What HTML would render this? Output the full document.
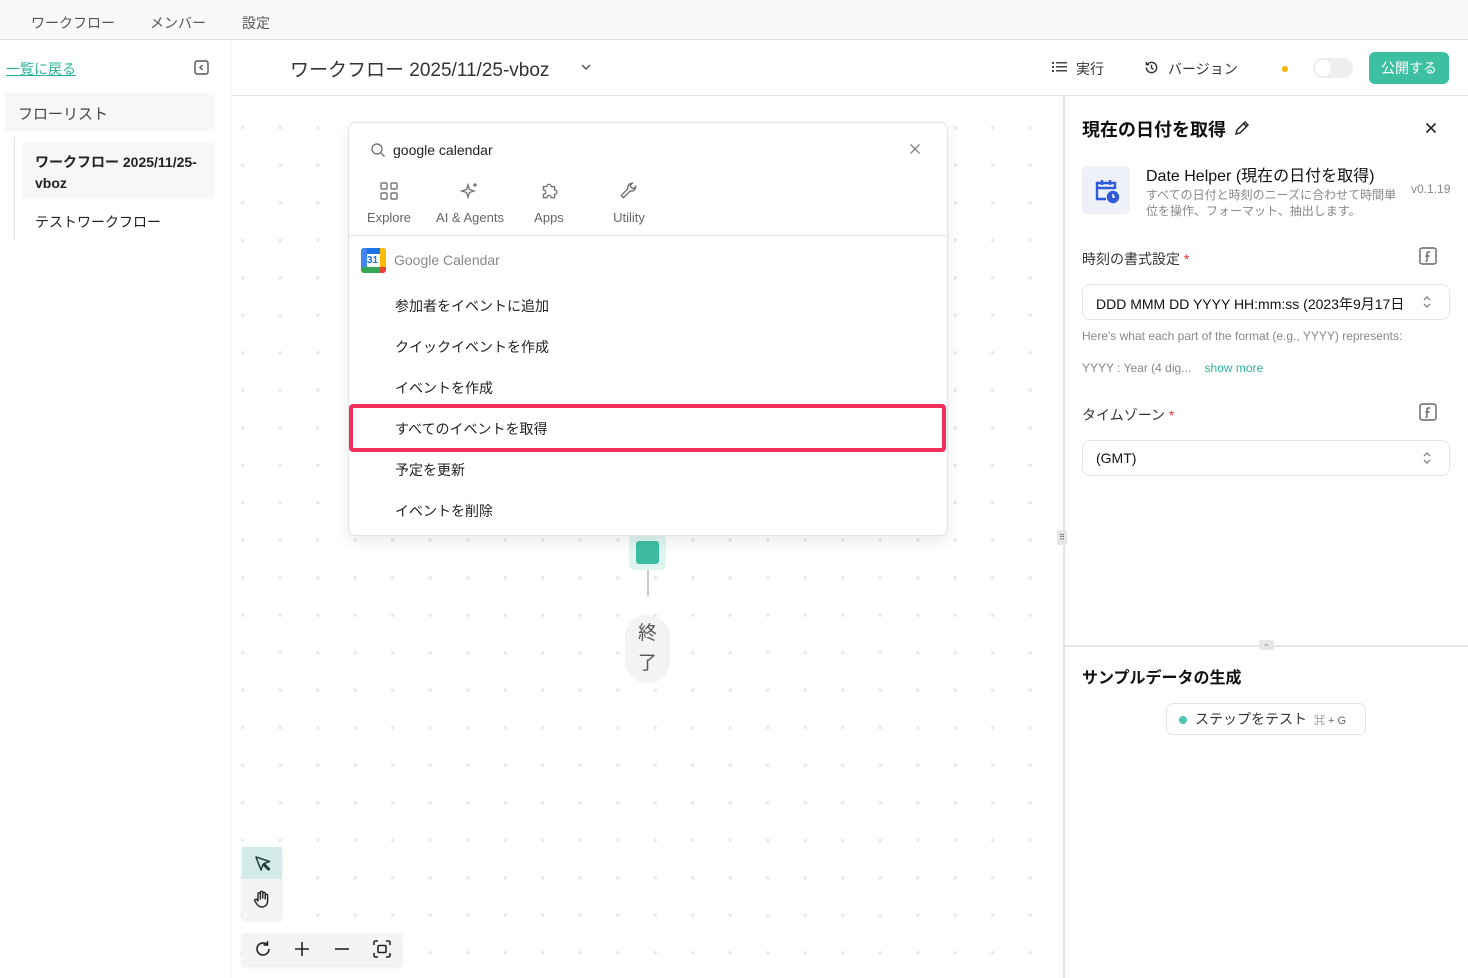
<!DOCTYPE html>
<html><head><meta charset="utf-8"><style>
*{box-sizing:border-box;margin:0;padding:0}
body{width:1468px;height:978px;overflow:hidden;background:#fff;font-family:"Liberation Sans","Noto Sans CJK JP",sans-serif;color:#222;position:relative;font-size:14px}
.abs{position:absolute}
.top{left:0;top:0;width:1468px;height:40px;background:#f8f9fb;border-bottom:1px solid #dcdfe4}
.top span{position:absolute;top:13px;font-size:14px;color:#555}
.side{left:0;top:40px;width:231px;height:938px;border-right:1px solid #eceef1;background:#fff}
.canvas{left:232px;top:96px;width:831px;height:882px;background-color:#fff;background-image:radial-gradient(circle,#e6e8eb 1.5px,transparent 2px);background-size:37.5px 37.5px;background-position:-8px 13px}
.hdr{left:232px;top:40px;width:1236px;height:56px;border-bottom:1px solid #e4e6ea;background:#fff}
.panel{left:1063px;top:96px;width:405px;height:882px;border-left:2px solid #e6e6e6;background:#fff}
.pop{left:348px;top:122px;width:600px;height:414px;background:#fff;border:1px solid #e2e4e8;border-radius:8px;box-shadow:0 6px 16px rgba(0,0,0,.08)}
.item{position:absolute;left:46px;font-size:14px;color:#222}
.tab{position:absolute;top:58px;text-align:center;font-size:13px;color:#666;width:70px}
.tab svg{display:block;margin:0 auto 9px}
.sel{border:1px solid #e2e4e8;border-radius:8px;height:36px;position:absolute;left:17px;width:368px;font-size:14px;padding:9px 13px;color:#111}
.tb{position:absolute;top:6px}
</style></head><body>
<div class="abs top"><span style="left:31px">ワークフロー</span><span style="left:150px">メンバー</span><span style="left:242px">設定</span></div>
<div class="abs side">
 <a class="abs" style="left:6px;top:19px;color:#2bb39a;text-decoration:underline;font-size:14px">一覧に戻る</a>
 <svg class="abs" style="left:194px;top:20px" width="15" height="15" viewBox="0 0 15 15" fill="none" stroke="#555" stroke-width="1.4"><rect x="1" y="1" width="13" height="13" rx="2"/><path d="M8.5 5L6 7.5 8.5 10"/></svg>
 <div class="abs" style="left:6px;top:53px;width:208px;height:38px;background:#f6f7f9;padding:10px 12px;font-size:15px;color:#444">フローリスト</div>
 <div class="abs" style="left:14px;top:97px;width:1px;height:103px;background:#e2e4e8"></div>
 <div class="abs" style="left:23px;top:103px;width:191px;height:56px;background:#f6f7f9;padding:9px 12px;font-size:14px;font-weight:bold;line-height:21px;color:#222">ワークフロー 2025/11/25-vboz</div>
 <div class="abs" style="left:35px;top:172px;font-size:14px;color:#222">テストワークフロー</div>
</div>
<div class="abs hdr">
 <div class="abs" style="left:58px;top:15px;font-size:19px;color:#333">ワークフロー 2025/11/25-vboz</div>
 <svg class="abs" style="left:348px;top:23px" width="12" height="8" viewBox="0 0 12 8" fill="none" stroke="#555" stroke-width="1.5"><path d="M2 2l4 4 4-4"/></svg>
 <svg class="abs" style="left:820px;top:21px" width="15" height="12" viewBox="0 0 15 12" fill="#444"><rect x="0" y="1" width="2" height="2"/><rect x="4" y="1" width="11" height="1.5"/><rect x="0" y="5" width="2" height="2"/><rect x="4" y="5" width="11" height="1.5"/><rect x="0" y="9" width="2" height="2"/><rect x="4" y="9" width="11" height="1.5"/></svg>
 <div class="abs" style="left:844px;top:19px;font-size:14px;color:#333">実行</div>
 <svg class="abs" style="left:912px;top:20px" width="15" height="15" viewBox="0 0 16 16" fill="none" stroke="#333" stroke-width="1.5"><path d="M2.5 8A5.5 5.5 0 108 2.5 5.5 5.5 0 003.5 5"/><path d="M2.5 2v3h3M8 5v3.5l2 1.5"/></svg>
 <div class="abs" style="left:936px;top:19px;font-size:14px;color:#333">バージョン</div>
 <div class="abs" style="left:1050px;top:26px;width:6px;height:6px;border-radius:50%;background:#f5b300"></div>
 <div class="abs" style="left:1081px;top:18px;width:40px;height:20px;border-radius:10px;background:#eceef0"><div style="margin:2px;width:16px;height:16px;border-radius:50%;background:#fff"></div></div>
 <div class="abs" style="left:1137px;top:12px;width:80px;height:32px;border-radius:6px;background:#3dbfa2;color:#fff;font-size:14px;text-align:center;line-height:32px">公開する</div>
</div>
<div class="abs canvas">
 <div class="abs" style="left:397px;top:438px;width:37px;height:36px;background:#dff5f0;border-radius:6px"><div style="margin:7px 0 0 7px;width:23px;height:23px;background:#3dbca3;border-radius:3px"></div></div>
 <div class="abs" style="left:415px;top:474px;width:2px;height:26px;background:#c8cbd0"></div>
 <div class="abs" style="left:393px;top:519px;width:45px;height:68px;border-radius:22px;background:#f3f3f3;text-align:center;font-size:19px;line-height:30px;padding-top:4px;color:#555">終<br>了</div>
 <div class="abs" style="left:10px;top:751px;width:40px;height:72px;background:#f3f4f5;box-shadow:0 2px 4px rgba(0,0,0,.08)">
  <div style="height:32px;background:#d3ebe8;position:relative"><svg class="abs" style="left:12px;top:8px" width="17" height="17" viewBox="0 0 17 17" fill="none" stroke="#1d3b36" stroke-width="1.5" stroke-linejoin="round"><path d="M2 2l5 13 2-5.5 5.5 5.5 1-1L10 8.5 15.5 6.5z"/></svg></div>
  <svg class="abs" style="left:10px;top:42px" width="20" height="20" viewBox="0 0 20 20" fill="none" stroke="#222" stroke-width="1.4" stroke-linecap="round"><path d="M6 11V5a1.2 1.2 0 012.4 0v5M8.4 9V3.5a1.2 1.2 0 012.4 0V9M10.8 9V4.5a1.2 1.2 0 012.4 0V10M13.2 10V6.5a1.2 1.2 0 012.4 0V12c0 3.5-2.5 6-5.5 6-2.5 0-3.8-1-5.3-3L2.8 12a1.2 1.2 0 012-1.3L6 12"/></svg>
 </div>
 <div class="abs" style="left:10px;top:837px;width:160px;height:32px;background:#f3f4f5;box-shadow:0 2px 4px rgba(0,0,0,.08)">
  <svg class="tb" style="left:11px" width="20" height="20" viewBox="0 0 20 20" fill="none" stroke="#222" stroke-width="1.6"><path d="M16 10a6 6 0 11-2-4.5"/><path d="M14.5 2v4h-4"/></svg>
  <svg class="tb" style="left:50px" width="20" height="20" viewBox="0 0 20 20" fill="none" stroke="#222" stroke-width="1.6"><path d="M10 3v14M3 10h14"/></svg>
  <svg class="tb" style="left:90px" width="20" height="20" viewBox="0 0 20 20" fill="none" stroke="#222" stroke-width="1.6"><path d="M3 10h14"/></svg>
  <svg class="tb" style="left:130px" width="20" height="20" viewBox="0 0 20 20" fill="none" stroke="#222" stroke-width="1.6"><path d="M2 6V3.5A1.5 1.5 0 013.5 2H6M14 2h2.5A1.5 1.5 0 0118 3.5V6M18 14v2.5a1.5 1.5 0 01-1.5 1.5H14M6 18H3.5A1.5 1.5 0 012 16.5V14"/><rect x="6" y="6.5" width="8" height="7" rx="1"/></svg>
 </div>
</div>
<div class="abs pop">
 <svg class="abs" style="left:21px;top:19px" width="16" height="16" viewBox="0 0 16 16" fill="none" stroke="#777" stroke-width="1.4"><circle cx="7" cy="7" r="5"/><path d="M11 11l3.5 3.5"/></svg>
 <div class="abs" style="left:44px;top:19px;font-size:14px;color:#222">google calendar</div>
 <svg class="abs" style="left:560px;top:20px" width="12" height="12" viewBox="0 0 12 12" stroke="#888" stroke-width="1.4"><path d="M1.5 1.5l9 9M10.5 1.5l-9 9"/></svg>
 <div class="tab" style="left:5px"><svg width="20" height="20" viewBox="-1 -1 20 20" fill="none" stroke="#777" stroke-width="1.4"><rect x="1" y="1" width="6" height="6" rx="1"/><rect x="11" y="1" width="6" height="6" rx="1"/><rect x="1" y="11" width="6" height="6" rx="1"/><rect x="11" y="11" width="6" height="6" rx="1"/></svg>Explore</div>
 <div class="tab" style="left:78px;width:86px"><svg width="20" height="20" viewBox="0 -1 20 20" fill="none" stroke="#777" stroke-width="1.4"><path d="M8 3l1.5 4.5L14 9l-4.5 1.5L8 15l-1.5-4.5L2 9l4.5-1.5z"/><path d="M15 1v4M13 3h4"/></svg>AI &amp; Agents</div>
 <div class="tab" style="left:165px"><svg width="20" height="20" viewBox="0 0 18 18" fill="none" stroke="#777" stroke-width="1.3"><path d="M4 5h3a2 2 0 114 0h3v3a2 2 0 110 4v3h-3a2 2 0 10-4 0H4v-3a2 2 0 100-4z"/></svg>Apps</div>
 <div class="tab" style="left:245px"><svg width="20" height="20" viewBox="0 0 18 18" fill="none" stroke="#777" stroke-width="1.3"><path d="M12 2a4 4 0 00-4 5L2 13l2 2 6-6a4 4 0 005-4l-2 2-2-1-1-2z"/></svg>Utility</div>
 <div class="abs" style="left:0;top:112px;width:598px;height:1px;background:#e4e6ea"></div>
 <div class="abs" style="left:12px;top:125px;width:25px;height:25px;border-radius:3px;background:#fff;overflow:hidden">
  <div class="abs" style="left:0;top:0;width:25px;height:6px;background:#1a73e8"></div>
  <div class="abs" style="left:19px;top:0;width:6px;height:19px;background:#fbbc04"></div>
  <div class="abs" style="left:0;top:19px;width:19px;height:6px;background:#34a853"></div>
  <div class="abs" style="left:0;top:0;width:6px;height:19px;background:#4285f4"></div>
  <div class="abs" style="left:19px;top:19px;width:6px;height:6px;background:#ea4335"></div>
  <div class="abs" style="left:6px;top:7px;font-size:10px;color:#1a73e8;font-weight:bold">31</div></div>
 <div class="abs" style="left:45px;top:129px;font-size:14px;color:#888">Google Calendar</div>
 <div class="item" style="top:173px">参加者をイベントに追加</div>
 <div class="item" style="top:214px">クイックイベントを作成</div>
 <div class="item" style="top:255px">イベントを作成</div>
 <div class="abs" style="left:0;top:281px;width:597px;height:48px;border:4px solid #f02f5b;border-radius:4px"></div>
 <div class="item" style="top:296px">すべてのイベントを取得</div>
 <div class="item" style="top:337px">予定を更新</div>
 <div class="item" style="top:378px">イベントを削除</div>
</div>
<div class="abs panel">
 <div class="abs" style="left:17px;top:20px;font-size:18px;font-weight:bold;color:#111">現在の日付を取得</div>
 <svg class="abs" style="left:169px;top:24px" width="16" height="16" viewBox="0 0 16 16" fill="none" stroke="#222" stroke-width="1.5"><path d="M2 14l1-4 8-8 3 3-8 8z"/><path d="M9.5 3.5l3 3"/></svg>
 <svg class="abs" style="left:360px;top:26px" width="12" height="12" viewBox="0 0 12 12" stroke="#222" stroke-width="1.6"><path d="M1.5 1.5l9 9M10.5 1.5l-9 9"/></svg>
 <div class="abs" style="left:17px;top:70px;width:48px;height:48px;background:#eef1f8;border-radius:4px">
  <svg style="margin:12px" width="26" height="26" viewBox="0 0 26 26" fill="none" stroke="#2f5bd8" stroke-width="2.4"><path d="M12 21H3V5h18v6M3 10h18M8 2v5M16 2v5"/><circle cx="19" cy="19" r="5" fill="#2f5bd8"/><path d="M19 16v3h2" stroke="#fff" stroke-width="1.5"/></svg></div>
 <div class="abs" style="left:81px;top:66px;font-size:16px;color:#111">Date Helper (現在の日付を取得)</div>
 <div class="abs" style="left:81px;top:91px;width:255px;font-size:12px;line-height:16px;color:#888">すべての日付と時刻のニーズに合わせて時間単位を操作、フォーマット、抽出します。</div>
 <div class="abs" style="left:346px;top:86px;font-size:12px;color:#888">v0.1.19</div>
 <div class="abs" style="left:17px;top:153px;font-size:14px;color:#333">時刻の書式設定 <span style="color:#e33">*</span></div>
 <svg class="abs" style="left:354px;top:151px" width="18" height="18" viewBox="0 0 18 18" fill="none" stroke="#666" stroke-width="1.4"><rect x="1" y="1" width="16" height="16" rx="2"/><path d="M11 5H9.5c-1 0-1.5.5-1.5 1.5V13c0 1-.5 1.5-1.5 1.5M6.5 9h4"/></svg>
 <div class="sel" style="top:188px;white-space:nowrap;overflow:hidden;padding-right:40px">DDD MMM DD YYYY HH:mm:ss (2023年9月17日</div>
 <svg class="abs" style="left:357px;top:199px" width="10" height="14" viewBox="0 0 10 14" fill="none" stroke="#888" stroke-width="1.4"><path d="M2 5l3-3 3 3M2 9l3 3 3-3"/></svg>
 <div class="abs" style="left:17px;top:233px;font-size:12px;color:#888">Here's what each part of the format (e.g., YYYY) represents:</div>
 <div class="abs" style="left:17px;top:265px;font-size:12px;color:#888">YYYY : Year (4 dig...&nbsp;&nbsp;&nbsp; <span style="color:#2bb39a">show more</span></div>
 <div class="abs" style="left:17px;top:309px;font-size:14px;color:#333">タイムゾーン <span style="color:#e33">*</span></div>
 <svg class="abs" style="left:354px;top:307px" width="18" height="18" viewBox="0 0 18 18" fill="none" stroke="#666" stroke-width="1.4"><rect x="1" y="1" width="16" height="16" rx="2"/><path d="M11 5H9.5c-1 0-1.5.5-1.5 1.5V13c0 1-.5 1.5-1.5 1.5M6.5 9h4"/></svg>
 <div class="sel" style="top:344px">(GMT)</div>
 <svg class="abs" style="left:357px;top:355px" width="10" height="14" viewBox="0 0 10 14" fill="none" stroke="#888" stroke-width="1.4"><path d="M2 5l3-3 3 3M2 9l3 3 3-3"/></svg>
 <div class="abs" style="left:-8px;top:434px;width:10px;height:15px;background:#e6e6e6;border-radius:2px;font-size:8px;line-height:15px;text-align:center;color:#444">⠿</div>
 <div class="abs" style="left:0;top:549px;width:403px;height:2px;background:#e6e6e6"></div>
 <div class="abs" style="left:194px;top:544px;width:15px;height:10px;background:#e6e6e6;border-radius:2px;font-size:7px;line-height:10px;text-align:center;color:#444">⠤</div>
 <div class="abs" style="left:17px;top:568px;font-size:16px;font-weight:bold;color:#111">サンプルデータの生成</div>
 <div class="abs" style="left:101px;top:607px;width:200px;height:32px;border:1px solid #e2e4e8;border-radius:7px;font-size:14px;line-height:30px;padding-left:12px;color:#333"><span style="display:inline-block;width:8px;height:8px;border-radius:50%;background:#4cc7b0;margin-right:8px"></span>ステップをテスト <span style="font-size:11px;color:#666">&nbsp;⌘ + G</span></div>
</div>
</body></html>
